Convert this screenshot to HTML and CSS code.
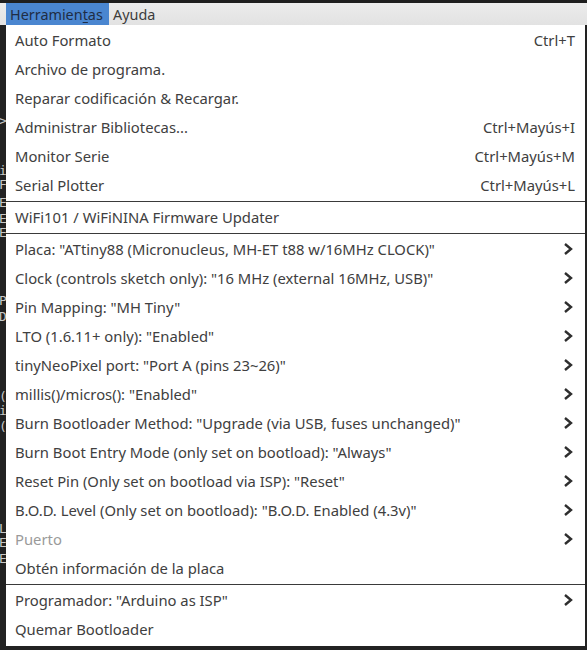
FILE: index.html
```html
<!DOCTYPE html>
<html>
<head>
<meta charset="utf-8">
<link rel="stylesheet" href="styles.css">
</head>
<body>
<div class="topstrip"></div>
<div class="menubar">
  <span class="mb-item active">Herramien<u>t</u>as</span>
  <span class="mb-item">Ayuda</span>
</div>
<div class="stage">
  <div class="gutter">
    <span style="top:88px">&gt;</span>
    <span style="top:138px">i</span>
    <span style="top:152px">F</span>
    <span style="top:170px">E</span>
    <span style="top:186px">E</span>
    <span style="top:200px">E</span>
    <span style="top:268px">P</span>
    <span style="top:284px">D</span>
    <span style="top:364px">(</span>
    <span style="top:378px">i</span>
    <span style="top:394px">(</span>
    <span style="top:496px">L</span>
    <span style="top:510px">E</span>
    <span style="top:526px">E</span>
  </div>
  <div class="menu">
    <div class="row"><span class="label">Auto Formato</span><span class="sc">Ctrl+T</span></div>
    <div class="row"><span class="label">Archivo de programa.</span></div>
    <div class="row"><span class="label">Reparar codificación &amp; Recargar.</span></div>
    <div class="row"><span class="label">Administrar Bibliotecas...</span><span class="sc">Ctrl+Mayús+I</span></div>
    <div class="row"><span class="label">Monitor Serie</span><span class="sc">Ctrl+Mayús+M</span></div>
    <div class="row"><span class="label">Serial Plotter</span><span class="sc">Ctrl+Mayús+L</span></div>
    <div class="sep"></div>
    <div class="row"><span class="label">WiFi101 / WiFiNINA Firmware Updater</span></div>
    <div class="sep"></div>
    <div class="row"><span class="label">Placa: "ATtiny88 (Micronucleus, MH-ET t88 w/16MHz CLOCK)"</span><svg class="chev" viewBox="0 0 10 14"><polyline points="2,2 8,7 2,12"/></svg></div>
    <div class="row"><span class="label">Clock (controls sketch only): "16 MHz (external 16MHz, USB)"</span><svg class="chev" viewBox="0 0 10 14"><polyline points="2,2 8,7 2,12"/></svg></div>
    <div class="row"><span class="label">Pin Mapping: "MH Tiny"</span><svg class="chev" viewBox="0 0 10 14"><polyline points="2,2 8,7 2,12"/></svg></div>
    <div class="row"><span class="label">LTO (1.6.11+ only): "Enabled"</span><svg class="chev" viewBox="0 0 10 14"><polyline points="2,2 8,7 2,12"/></svg></div>
    <div class="row"><span class="label">tinyNeoPixel port: "Port A (pins 23~26)"</span><svg class="chev" viewBox="0 0 10 14"><polyline points="2,2 8,7 2,12"/></svg></div>
    <div class="row"><span class="label">millis()/micros(): "Enabled"</span><svg class="chev" viewBox="0 0 10 14"><polyline points="2,2 8,7 2,12"/></svg></div>
    <div class="row"><span class="label">Burn Bootloader Method: "Upgrade (via USB, fuses unchanged)"</span><svg class="chev" viewBox="0 0 10 14"><polyline points="2,2 8,7 2,12"/></svg></div>
    <div class="row"><span class="label">Burn Boot Entry Mode (only set on bootload): "Always"</span><svg class="chev" viewBox="0 0 10 14"><polyline points="2,2 8,7 2,12"/></svg></div>
    <div class="row"><span class="label">Reset Pin (Only set on bootload via ISP): "Reset"</span><svg class="chev" viewBox="0 0 10 14"><polyline points="2,2 8,7 2,12"/></svg></div>
    <div class="row"><span class="label">B.O.D. Level (Only set on bootload): "B.O.D. Enabled (4.3v)"</span><svg class="chev" viewBox="0 0 10 14"><polyline points="2,2 8,7 2,12"/></svg></div>
    <div class="row disabled"><span class="label">Puerto</span><svg class="chev" viewBox="0 0 10 14"><polyline points="2,2 8,7 2,12"/></svg></div>
    <div class="row"><span class="label">Obtén información de la placa</span></div>
    <div class="sep"></div>
    <div class="row"><span class="label">Programador: "Arduino as ISP"</span><svg class="chev" viewBox="0 0 10 14"><polyline points="2,2 8,7 2,12"/></svg></div>
    <div class="row"><span class="label">Quemar Bootloader</span></div>
  </div>
  <div class="rgutter"></div>
</div>
</body>
</html>
```
FILE: styles.css
```css
* { box-sizing: border-box; }
html, body { margin: 0; padding: 0; }
body {
  width: 587px;
  height: 650px;
  overflow: hidden;
  background: #222222;
  font-family: "Noto Sans", "DejaVu Sans", sans-serif;
  font-size: 14.8px;
  color: #404040;
}
.topstrip { height: 3px; background: #1f1f1f; }
.menubar {
  height: 22px;
  background: linear-gradient(#ececec, #e2e2e2);
  display: flex;
  align-items: stretch;
  padding-left: 6px;
  font-size: 14.4px;
}
.mb-item {
  display: flex;
  align-items: center;
  padding: 0 4px;
  color: #3c3c3c;
}
.mb-item.active {
  background: #4a86d0;
  color: #1f2d44;
  width: 103px;
}
.mb-item u { text-decoration-thickness: 1px; text-underline-offset: 2px; }
.stage { display: flex; height: 625px; }
.gutter {
  width: 6px;
  position: relative;
  overflow: hidden;
  color: #c8c8c8;
  font-family: "DejaVu Sans Mono", monospace;
  font-size: 13px;
}
.gutter span { position: absolute; left: -1px; }
.menu {
  width: 579px;
  height: 621px;
  background: #ffffff;
  padding: 0 0 3px;
  display: flex;
  flex-direction: column;
}
.rgutter { width: 2px; }
.row {
  height: 29px;
  display: flex;
  align-items: center;
  padding: 0 10px 0 9px;
  white-space: nowrap;
}
.row .label { flex: 1; }
.row .sc { color: #404040; }
.row.disabled .label { color: #9a9a9a; }
.chev {
  width: 10px;
  height: 14px;
  margin-right: 2px;
  fill: none;
  stroke: #2e2e2e;
  stroke-width: 2.4;
  stroke-linejoin: miter;
}
.sep {
  height: 1px;
  margin: 2px 0 0;
  background: #3a3a3a;
}
```
